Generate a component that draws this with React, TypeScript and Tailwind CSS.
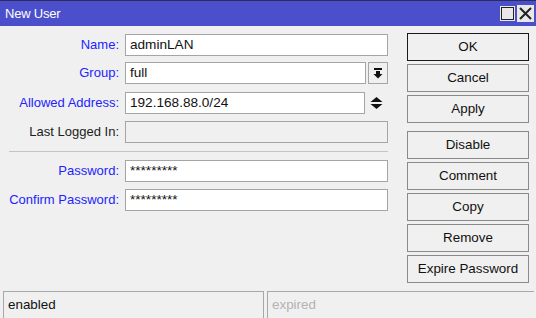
import React from "react";

const font = { fontFamily: '"Liberation Sans", Arial, sans-serif' };

function Field({
  label,
  value,
  blue = true,
  width = "w-[263px]",
  disabled = false,
  className = "",
  children,
}: {
  label: string;
  value?: string;
  blue?: boolean;
  width?: string;
  disabled?: boolean;
  className?: string;
  children?: React.ReactNode;
}) {
  return (
    <div className={`flex items-center h-[22px] ${className}`}>
      <div
        className={`w-[120px] pr-[1px] text-right text-[13px] ${
          blue ? "text-[#2323ff]" : "text-[#1c1c1c]"
        }`}
      >
        {label}
      </div>
      <div
        className={`ml-[5px] h-[22px] ${width} border border-[#a5a5a5] flex items-center px-[4px] text-[13.6px] text-[#111] ${
          disabled ? "bg-[#f0f0f0]" : "bg-white"
        }`}
      >
        {value}
      </div>
      {children}
    </div>
  );
}

function Btn({ label, className = "", primary = false }: { label: string; className?: string; primary?: boolean }) {
  return (
    <div
      className={`h-[28px] w-[122px] flex items-center justify-center text-[13.4px] text-[#111] bg-[#f0f0f0] border ${
        primary ? "border-[#1a1a1a]" : "border-[#8a8a8a]"
      } ${className}`}
    >
      {label}
    </div>
  );
}

export default function App() {
  return (
    <div className="w-[536px] h-[318px] bg-[#f0f0f0] flex flex-col overflow-hidden" style={font}>
      {/* title bar */}
      <div className="h-[26px] border-t border-[#2c2c5a] bg-[#4b4fcb] flex items-center pl-[5px] pr-[2px]">
        <span className="text-white text-[13px] tracking-[-0.2px]">New User</span>
        <div className="ml-auto flex items-center gap-[2px]">
          <div className="w-[15px] h-[15px] bg-[#e8e8e8] flex items-center justify-center">
            <div className="w-[13px] h-[13px] border-[1.5px] border-[#222]" />
          </div>
          <div className="w-[17px] h-[17px] bg-[#e8e8e8] flex items-center justify-center">
            <svg width="15" height="15" viewBox="0 0 15 15">
              <path d="M2 2 L13 13 M13 2 L2 13" stroke="#222" strokeWidth="2" />
            </svg>
          </div>
        </div>
      </div>

      {/* body */}
      <div className="flex-1 flex">
        <div className="w-[388px] flex flex-col pt-[8px]">
          <Field label="Name:" value="adminLAN" />
          <Field label="Group:" value="full" width="w-[241px]" className="mt-[6px]">
            <div className="ml-[2px] w-[20px] h-[22px] border border-[#a5a5a5] bg-[#f0f0f0] flex items-center justify-center">
              <svg width="10" height="11" viewBox="0 0 10 11">
                <rect x="1" y="0" width="8" height="2" fill="#111" />
                <path d="M3 3 H7 V6 H9.5 L5 10.5 L0.5 6 H3 Z" fill="#111" />
              </svg>
            </div>
          </Field>
          <Field label="Allowed Address:" value="192.168.88.0/24" width="w-[240px]" className="mt-[8px]">
            <div className="w-[23px] flex items-center justify-center">
              <svg width="13" height="12" viewBox="0 0 13 12">
                <path d="M6.5 0 L12.5 5 H0.5 Z" fill="#111" />
                <path d="M0.5 7 H12.5 L6.5 12 Z" fill="#111" />
              </svg>
            </div>
          </Field>
          <Field label="Last Logged In:" blue={false} disabled className="mt-[7px]" />
          <div className="ml-[9px] mt-[8px] h-px bg-[#c4c4c4]" />
          <Field label="Password:" value="*********" className="mt-[8px]" />
          <Field label="Confirm Password:" value="*********" className="mt-[7px]" />
        </div>

        <div className="ml-[19px] flex flex-col pt-[7px]">
          <Btn label="OK" primary />
          <Btn label="Cancel" className="mt-[3px]" />
          <Btn label="Apply" className="mt-[3px]" />
          <Btn label="Disable" className="mt-[8px]" />
          <Btn label="Comment" className="mt-[3px]" />
          <Btn label="Copy" className="mt-[3px]" />
          <Btn label="Remove" className="mt-[3px]" />
          <Btn label="Expire Password" className="mt-[3px]" />
        </div>
      </div>

      {/* status bar */}
      <div className="h-[27px] flex pl-[3px] pr-[2px] gap-[3px]">
        <div className="w-[261px] border-t border-l border-r border-[#a8a8a8] flex items-center pl-[4px] text-[13.4px] text-[#111]">
          enabled
        </div>
        <div className="flex-1 border-t border-l border-[#a8a8a8] flex items-center pl-[4px] text-[13.4px] text-[#b3b3b3]">
          expired
        </div>
      </div>
    </div>
  );
}
